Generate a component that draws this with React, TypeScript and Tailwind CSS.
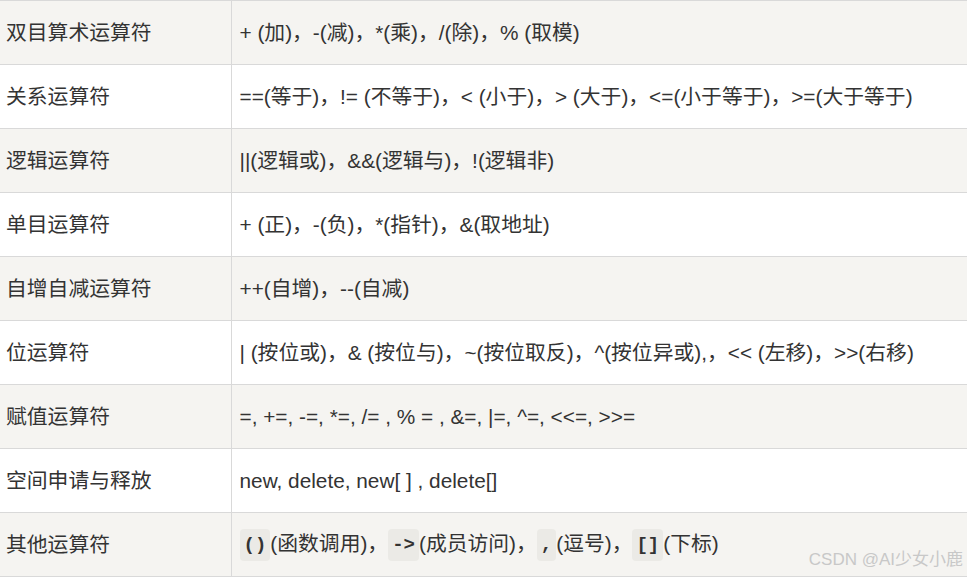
import React from "react";

type Part = string | { code: string };

const rows: { name: string; parts: Part[] }[] = [
  { name: "双目算术运算符", parts: ["+ (加)，-(减)，*(乘)，/(除)，% (取模)"] },
  { name: "关系运算符", parts: ["==(等于)，!= (不等于)，< (小于)，> (大于)，<=(小于等于)，>=(大于等于)"] },
  { name: "逻辑运算符", parts: ["||(逻辑或)，&&(逻辑与)，!(逻辑非)"] },
  { name: "单目运算符", parts: ["+ (正)，-(负)，*(指针)，&(取地址)"] },
  { name: "自增自减运算符", parts: ["++(自增)，--(自减)"] },
  { name: "位运算符", parts: ["| (按位或)，& (按位与)，~(按位取反)，^(按位异或),，<< (左移)，>>(右移)"] },
  { name: "赋值运算符", parts: ["=, +=, -=, *=, /= , % = , &=, |=, ^=, <<=, >>="] },
  { name: "空间申请与释放", parts: ["new, delete, new[ ] , delete[]"] },
  {
    name: "其他运算符",
    parts: [
      { code: "()" },
      "(函数调用)，",
      { code: "->" },
      "(成员访问)，",
      { code: "," },
      "(逗号)，",
      { code: "[]" },
      "(下标)",
    ],
  },
];

export default function App() {
  return (
    <div
      className="relative w-[967px] h-[579px] bg-white overflow-hidden text-[#333] text-[20.8px]"
      style={{ fontFamily: '"Liberation Sans", "Noto Sans CJK SC", sans-serif' }}
    >
      <table className="w-full border-collapse">
        <tbody>
          {rows.map((r, i) => (
            <tr
              key={r.name}
              className={`h-[64px] border-t border-b border-[#d9d9d9] ${i % 2 === 0 ? "bg-[#f5f4f1]" : "bg-white"}`}
            >
              <td className="w-[231px] pl-[6px] border-r border-[#d9d9d9] leading-[24px] whitespace-nowrap">
                {r.name}
              </td>
              <td className="pl-[8px] leading-[24px] whitespace-nowrap">
                {r.parts.map((p, j) =>
                  typeof p === "string" ? (
                    <span key={j}>{p}</span>
                  ) : (
                    <code
                      key={j}
                      className="inline-block bg-[#ebeae6] rounded-[4px] px-[4px] py-[4px] align-middle font-bold text-[19px] leading-[24px]"
                      style={{ fontFamily: '"Liberation Mono", "DejaVu Sans Mono", monospace' }}
                    >
                      {p.code}
                    </code>
                  )
                )}
              </td>
            </tr>
          ))}
        </tbody>
      </table>
      <div className="absolute right-[4px] top-[549px] text-[17px] leading-[22px] text-[#c8c8c8]">
        CSDN @AI少女小鹿
      </div>
    </div>
  );
}
